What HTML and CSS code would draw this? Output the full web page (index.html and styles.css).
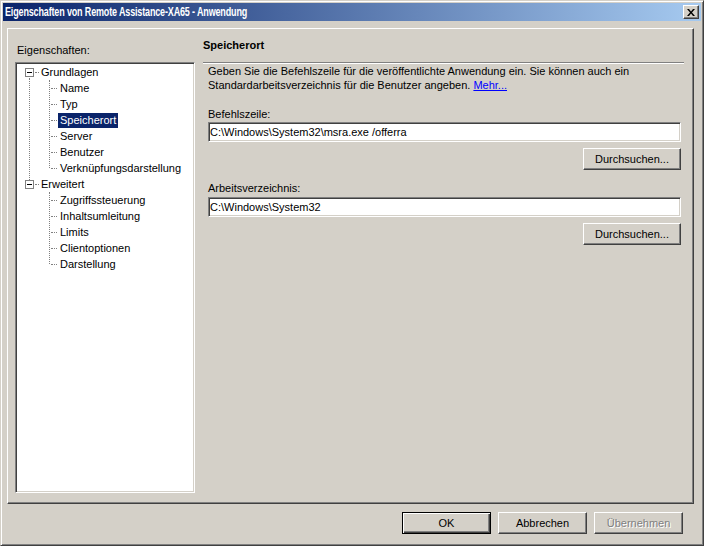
FILE: index.html
```html
<!DOCTYPE html>
<html lang="de">
<head>
    <meta charset="UTF-8">
    <title>Eigenschaften von Remote Assistance-XA65 - Anwendung</title>
    <link rel="stylesheet" href="styles.css">
</head>
<body>

    <div class="window">
        <!-- Title bar -->
        <div class="titlebar">
            <span class="title">Eigenschaften von Remote Assistance-XA65 - Anwendung</span>
            <button class="close-btn" title="Schließen">
                <svg width="8" height="7" viewBox="0 0 8 7">
                    <path d="M0 0h2l2 2.5L6 0h2L5 3.5 8 7H6L4 4.5 2 7H0l3-3.5z" fill="#000"/>
                </svg>
            </button>
        </div>

        <div class="panel">
            <!-- Left: properties tree -->
            <div class="side">
                <div class="side-label">Eigenschaften:</div>
                <ul class="tree">
                    <li class="node first">
                        <div class="row root"><span class="toggle"></span><span class="label">Grundlagen</span></div>
                        <ul class="children">
                            <li class="leaf"><span class="label">Name</span></li>
                            <li class="leaf"><span class="label">Typ</span></li>
                            <li class="leaf"><span class="label selected">Speicherort</span></li>
                            <li class="leaf"><span class="label">Server</span></li>
                            <li class="leaf"><span class="label">Benutzer</span></li>
                            <li class="leaf"><span class="label">Verknüpfungsdarstellung</span></li>
                        </ul>
                    </li>
                    <li class="node">
                        <div class="row root"><span class="toggle"></span><span class="label">Erweitert</span></div>
                        <ul class="children">
                            <li class="leaf"><span class="label">Zugriffssteuerung</span></li>
                            <li class="leaf"><span class="label">Inhaltsumleitung</span></li>
                            <li class="leaf"><span class="label">Limits</span></li>
                            <li class="leaf"><span class="label">Clientoptionen</span></li>
                            <li class="leaf"><span class="label">Darstellung</span></li>
                        </ul>
                    </li>
                </ul>
            </div>

            <!-- Right: page content -->
            <div class="content">
                <div class="page-title">Speicherort</div>
                <div class="rule"></div>
                <div class="form">
                    <p class="desc">Geben Sie die Befehlszeile für die veröffentlichte Anwendung ein. Sie können auch ein Standardarbeitsverzeichnis für die Benutzer angeben. <a href="#">Mehr...</a></p>

                    <label class="field-label" for="cmdLine">Befehlszeile:</label>
                    <input class="field" type="text" id="cmdLine" value="C:\Windows\System32\msra.exe /offerra">
                    <div class="btn-row"><button class="btn">Durchsuchen...</button></div>

                    <label class="field-label second" for="workDir">Arbeitsverzeichnis:</label>
                    <input class="field" type="text" id="workDir" value="C:\Windows\System32">
                    <div class="btn-row"><button class="btn">Durchsuchen...</button></div>
                </div>
            </div>
        </div>

        <!-- Dialog buttons -->
        <div class="footer">
            <button class="btn default">OK</button>
            <button class="btn">Abbrechen</button>
            <button class="btn" disabled>Übernehmen</button>
        </div>
    </div>

</body>
</html>
```

FILE: styles.css
```css
body {
    margin: 0;
    font-family: "Liberation Sans", Arial, sans-serif;
    font-size: 11px;
    color: #000;
    background: #d4d0c8;
}

.window {
    width: 704px;
    height: 546px;
    box-sizing: border-box;
    background: #d4d0c8;
    border: 1px solid;
    border-color: #d4d0c8 #404040 #404040 #d4d0c8;
    box-shadow: inset 1px 1px #fff, inset -1px -1px #808080;
    padding: 2px;
    display: flex;
    flex-direction: column;
}

/* title bar */
.titlebar {
    height: 18px;
    display: flex;
    align-items: center;
    justify-content: space-between;
    background: linear-gradient(to right, #0a246a, #a6caf0);
    padding: 0 2px 0 2px;
}

.title {
    color: #fff;
    font-weight: bold;
    font-size: 12px;
    letter-spacing: -0.2px;
    white-space: nowrap;
    /* the system caption font is a condensed bold face */
    transform: scaleX(0.75);
    transform-origin: left center;
}

.close-btn {
    width: 16px;
    height: 14px;
    padding: 0;
    background: #d4d0c8;
    border: 1px solid;
    border-color: #fff #404040 #404040 #fff;
    box-shadow: inset -1px -1px #808080;
    display: flex;
    align-items: center;
    justify-content: center;
}

/* main panel */
.panel {
    margin: 7px 7px 0 4px;
    height: 476px;
    box-sizing: border-box;
    border: 1px solid;
    border-color: #fff #404040 #404040 #fff;
    box-shadow: inset -1px -1px #808080;
    display: flex;
    gap: 8px;
    padding: 0 9px 0 7px;
}

.side {
    width: 180px;
    display: flex;
    flex-direction: column;
    padding-top: 15px;
}

.side-label {
    line-height: 13px;
    margin-bottom: 5px;
    padding-left: 2px;
}

/* tree view */
.tree {
    list-style-type: none;
    margin: 0;
    padding: 1px 0 0 0;
    height: 431px;
    box-sizing: border-box;
    background: #fff;
    border: 1px solid;
    border-color: #808080 #fff #fff #808080;
    box-shadow: inset 1px 1px #404040, inset -1px -1px #d4d0c8;
}

.tree ul {
    list-style-type: none;
    margin: 0;
    padding: 0;
}

.node {
    position: relative;
}

.node.first::before {
    content: "";
    position: absolute;
    left: 13px;
    top: 14px;
    bottom: -4px;
    border-left: 1px dotted #808080;
}

.row {
    height: 16px;
    display: flex;
    align-items: center;
    padding-left: 9px;
}

.toggle {
    width: 9px;
    height: 9px;
    box-sizing: border-box;
    border: 1px solid #808080;
    background: #fff;
    position: relative;
    margin-right: 5px;
}

.toggle::after {
    content: "";
    position: absolute;
    left: 1px;
    top: 3px;
    width: 5px;
    height: 1px;
    background: #000;
}

.root {
    position: relative;
}

.root::after {
    content: "";
    position: absolute;
    left: 19px;
    top: 8px;
    width: 4px;
    border-top: 1px dotted #808080;
}

.children {
    position: relative;
}

.children::before {
    content: "";
    position: absolute;
    left: 33px;
    top: 0;
    bottom: 8px;
    border-left: 1px dotted #808080;
}

.leaf {
    height: 16px;
    display: flex;
    align-items: center;
    padding-left: 42px;
    position: relative;
}

.leaf::before {
    content: "";
    position: absolute;
    left: 35px;
    top: 8px;
    width: 6px;
    border-top: 1px dotted #808080;
}

.label {
    padding: 0 2px;
    line-height: 15px;
    white-space: nowrap;
}

.label.selected {
    background: #0a246a;
    color: #fff;
}

/* content */
.content {
    flex: 1;
    padding-top: 10px;
}

.page-title {
    font-weight: bold;
    line-height: 13px;
}

.rule {
    margin-top: 10px;
    height: 0;
    border-top: 1px solid #808080;
    border-bottom: 1px solid #fff;
}

.form {
    padding: 0 3px 0 5px;
    display: flex;
    flex-direction: column;
}

.desc {
    margin: 0;
    line-height: 14px;
}

.desc a {
    color: #0000ff;
}

.field-label {
    display: block;
    line-height: 13px;
    margin-top: 16px;
    margin-bottom: 1px;
}

.field-label.second {
    margin-top: 12px;
    margin-bottom: 2px;
}

.field {
    height: 20px;
    box-sizing: border-box;
    font: inherit;
    padding: 0 1px;
    margin: 0;
    background: #fff;
    border: 1px solid;
    border-color: #808080 #fff #fff #808080;
    box-shadow: inset 1px 1px #404040, inset -1px -1px #d4d0c8;
    outline: none;
}

.btn-row {
    display: flex;
    justify-content: flex-end;
    margin-top: 6px;
}

/* push buttons */
.btn {
    width: 98px;
    height: 22px;
    box-sizing: border-box;
    font: inherit;
    color: #000;
    background: #d4d0c8;
    border: 1px solid;
    border-color: #fff #404040 #404040 #fff;
    box-shadow: inset -1px -1px #808080;
    padding: 0;
}

.btn:disabled {
    color: #808080;
    text-shadow: 1px 1px #fff;
}

.btn.default {
    border-color: #000;
    box-shadow: inset 1px 1px #fff, inset -1px -1px #404040, inset -2px -2px #808080;
}

.footer {
    display: flex;
    justify-content: flex-end;
    gap: 7px;
    margin-top: 8px;
    padding-right: 18px;
}

.footer .btn {
    width: 89px;
}
```
